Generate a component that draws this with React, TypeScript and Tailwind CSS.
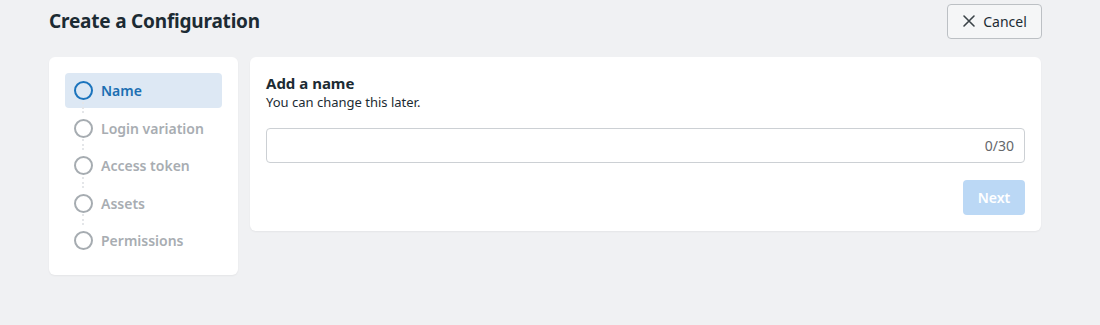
import { useState } from "react";

const steps = ["Name", "Login variation", "Access token", "Assets", "Permissions"];

function Circle({ active }: { active: boolean }) {
  return (
    <span
      className={
        "block w-[19px] h-[19px] rounded-full border-2 shrink-0 " +
        (active ? "border-[#1b74bd]" : "border-[#a6acb1]")
      }
    />
  );
}

export default function App() {
  const [name, setName] = useState("");

  return (
    <div
      className="w-[1100px] h-[325px] bg-[#f0f1f3] text-[#1c2b33] px-[49px]"
      style={{ fontFamily: '"Noto Sans", "Open Sans", sans-serif' }}
    >
      <div className="flex items-center justify-between h-[41px] pt-[1px]">
        <h1 className="text-[19px] font-bold tracking-[-0.2px]">Create a Configuration</h1>
        <button className="flex items-center gap-[7px] h-[35px] w-[95px] justify-center rounded-[4px] border border-[#bcc0c4] bg-[#f5f6f7] text-[14px] text-[#1c2b33] mr-[9px]">
          <svg width="14" height="14" viewBox="0 0 14 14" fill="none" stroke="#3b4348" strokeWidth="1.6" strokeLinecap="round">
            <path d="M2 2 L12 12 M12 2 L2 12" />
          </svg>
          Cancel
        </button>
      </div>

      <div className="flex items-start gap-[12px] mt-[16px] pr-[10px]">
        <div className="w-[189px] h-[218px] bg-white rounded-[6px] shadow-[0_1px_2px_rgba(0,0,0,0.05)] px-[16px] pt-[16px]">
          <ul className="flex flex-col">
            {steps.map((s, i) => {
              const active = i === 0;
              return (
                <li key={s} className="relative">
                  {i > 0 && (
                    <span className="absolute left-[17px] top-[-9px] h-[11px] border-l-2 border-dotted border-[#e4e6e9]" />
                  )}
                  <div
                    className={
                      "flex items-center gap-[8px] h-[35px] px-[9px] rounded-[4px] mb-[2.6px] " +
                      (active ? "bg-[#dde8f4]" : "")
                    }
                  >
                    <Circle active={active} />
                    <span
                      className={
                        "text-[14px] font-semibold " +
                        (active ? "text-[#1b6fb2]" : "text-[#a8adb2]")
                      }
                    >
                      {s}
                    </span>
                  </div>
                </li>
              );
            })}
          </ul>
        </div>

        <div className="flex-1 h-[174px] bg-white rounded-[6px] shadow-[0_1px_2px_rgba(0,0,0,0.05)] px-[16px] pt-[16px]">
          <h2 className="text-[15px] font-bold leading-[20px]">Add a name</h2>
          <p className="text-[13px] leading-[18px] text-[#1c2b33]">You can change this later.</p>
          <div className="mt-[17px] h-[35px] flex items-center rounded-[4px] border border-[#ccd0d4] px-[10px]">
            <input
              value={name}
              onChange={(e) => setName(e.target.value.slice(0, 30))}
              className="flex-1 outline-none bg-transparent text-[14px]"
            />
            <span className="text-[14px] text-[#65676b]">{name.length}/30</span>
          </div>
          <div className="flex justify-end mt-[17px]">
            <button
              disabled
              className="h-[35px] w-[62px] rounded-[4px] bg-[#bbd8f5] text-white text-[14px] font-semibold"
            >
              Next
            </button>
          </div>
        </div>
      </div>
    </div>
  );
}
